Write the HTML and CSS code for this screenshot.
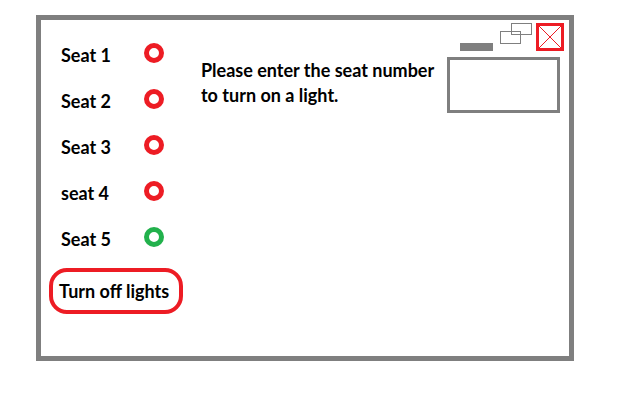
FILE: index.html
```html
<!DOCTYPE html>
<html lang="en">
<head>
    <meta charset="UTF-8">
    <title>Seat Lights</title>
    <link rel="stylesheet" href="styles.css">
</head>
<body>
    <div class="window">
        <div class="seats">
            <div class="seat"><span class="seat-name">Seat 1</span><span class="light"></span></div>
            <div class="seat"><span class="seat-name">Seat 2</span><span class="light"></span></div>
            <div class="seat"><span class="seat-name">Seat 3</span><span class="light"></span></div>
            <div class="seat"><span class="seat-name">seat 4</span><span class="light"></span></div>
            <div class="seat"><span class="seat-name">Seat 5</span><span class="light on"></span></div>
            <button class="off-button">Turn off lights</button>
        </div>
        <div class="message">Please enter the seat number to turn on a light.</div>
        <div class="side">
            <div class="controls">
                <span class="minimize"></span>
                <svg class="restore" width="33" height="22" viewBox="0 0 33 22">
                    <rect x="11.5" y="0.5" width="20" height="11" fill="none" stroke="#7f7f7f"/>
                    <rect x="0.5" y="8.5" width="20" height="12" fill="none" stroke="#7f7f7f"/>
                </svg>
                <svg class="close" width="28" height="28" viewBox="0 0 28 28">
                    <rect x="1.5" y="1.5" width="25" height="25" fill="none" stroke="#ed1c24" stroke-width="3"/>
                    <line x1="3" y1="3" x2="25" y2="25" stroke="#ed1c24"/>
                    <line x1="25" y1="3" x2="3" y2="25" stroke="#ed1c24"/>
                </svg>
            </div>
            <input class="seat-input" type="text">
        </div>
    </div>
</body>
</html>
```

FILE: styles.css
```css
body {
    margin: 0;
    background-color: white;
    font-family: Lato, "Liberation Sans", sans-serif;
    font-weight: bold;
    font-size: 18px;
    color: black;
}
.window {
    box-sizing: border-box;
    width: 538px;
    height: 346px;
    margin: 15px 0 0 36px;
    border: 5px solid #7f7f7f;
    display: flex;
}
.seats {
    width: 160px;
    padding: 12px 0 0 8px;
    box-sizing: border-box;
}
.seat {
    height: 46px;
    display: flex;
    align-items: center;
    padding-left: 12px;
}
.seat-name {
    width: 83px;
}
.light {
    box-sizing: border-box;
    width: 20px;
    height: 20px;
    border: 5px solid #ed1c24;
    border-radius: 50%;
    margin-bottom: 4px;
}
.light.on {
    border-color: #22b14c;
}
.off-button {
    margin-top: 6px;
    box-sizing: border-box;
    width: 134px;
    height: 46px;
    border: 4px solid #ed1c24;
    border-radius: 18px;
    background: white;
    font: inherit;
    text-align: left;
    padding: 0 0 0 6px;
    color: black;
}
.message {
    flex: 1;
    padding-top: 38px;
    line-height: 25px;
    padding-right: 6px;
}
.side {
    width: 122px;
    display: flex;
    flex-direction: column;
    align-items: flex-end;
}
.controls {
    display: flex;
    align-items: flex-end;
    margin-top: 3px;
    margin-right: 5px;
}
.minimize {
    width: 33px;
    height: 8px;
    background: #7f7f7f;
}
.restore {
    margin: 0 3px 6px 7px;
}
.close {
    display: block;
}
.seat-input {
    box-sizing: border-box;
    width: 113px;
    height: 56px;
    margin: 6px 9px 0 0;
    border: 3px solid #7f7f7f;
    padding: 0;
}
```
